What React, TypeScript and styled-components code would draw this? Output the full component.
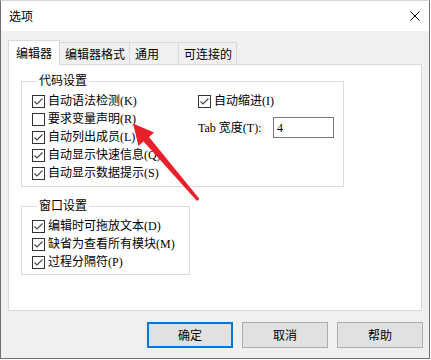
import styled, { createGlobalStyle } from "styled-components";

const GlobalStyle = createGlobalStyle`
  html, body {
    margin: 0;
    background: #ffffff;
  }
  body {
    font-family: "Noto Sans CJK SC", sans-serif;
  }
`;

const Window = styled.div`
  position: relative;
  box-sizing: border-box;
  width: 430px;
  height: 359px;
  border: 1px solid #6f6f6f;
  border-top-color: #d6d6d6;
  background: #f0f0f0;
  display: flex;
  flex-direction: column;
`;

const TitleBar = styled.div`
  height: 30px;
  flex: 0 0 auto;
  background: #ffffff;
  display: flex;
  align-items: center;
  justify-content: space-between;
  padding: 0 9px 0 8px;
  font: 12px/16px "Noto Sans CJK SC", sans-serif;
  color: #000;
`;

const Body = styled.div`
  flex: 1;
  display: flex;
  flex-direction: column;
  padding: 9px 7px 10px 7px;
`;

const TabStrip = styled.div`
  position: relative;
  z-index: 1;
  display: flex;
  align-items: flex-start;
  height: 25px;
  margin-bottom: -1px;
`;

const Tab = styled.div<{ $active?: boolean; $w: number }>`
  box-sizing: border-box;
  position: relative;
  z-index: ${(p) => (p.$active ? 2 : 1)};
  width: ${(p) => p.$w}px;
  height: ${(p) => (p.$active ? 25 : 22)}px;
  margin-top: ${(p) => (p.$active ? 0 : 2)}px;
  margin-left: -1px;
  &:first-child {
    margin-left: 0;
  }
  padding-left: ${(p) => (p.$active ? 7 : 5)}px;
  border: 1px solid #d9d9d9;
  border-bottom: none;
  background: ${(p) => (p.$active ? "#ffffff" : "#f0f0f0")};
  display: flex;
  align-items: center;
  font: 12px/16px "Noto Sans CJK SC", sans-serif;
  color: #000;
  white-space: nowrap;
`;

const Panel = styled.div`
  box-sizing: border-box;
  height: 247px;
  background: #ffffff;
  border: 1px solid #d9d9d9;
  padding: 9px 0 0 12px;
  display: flex;
  flex-direction: column;
  gap: 12px;
`;

const Group = styled.fieldset<{ $w: number; $pb: number }>`
  box-sizing: border-box;
  width: ${(p) => p.$w}px;
  margin: 0;
  padding: 4px 0 ${(p) => p.$pb}px 10px;
  border: 1px solid #dcdcdc;
  min-inline-size: 0;
`;

const Legend = styled.legend`
  margin-left: 5px;
  padding: 0 2px;
  height: 14px;
  font: 12px/14px "Liberation Serif", "Noto Sans CJK SC", serif;
  color: #000;
`;

const GroupBody = styled.div`
  display: flex;
`;

const Column = styled.div<{ $w?: number }>`
  display: flex;
  flex-direction: column;
  width: ${(p) => (p.$w ? `${p.$w}px` : "auto")};
`;

const CheckRow = styled.label`
  display: flex;
  align-items: center;
  gap: 3px;
  height: 18px;
  font: 12px/14px "Liberation Serif", "Noto Sans CJK SC", serif;
  color: #000;
  white-space: nowrap;
`;

const Box = styled.span`
  box-sizing: border-box;
  width: 13px;
  height: 13px;
  flex: 0 0 13px;
  border: 1px solid #333333;
  background: #ffffff;
  display: flex;
`;

const FieldRow = styled.div`
  display: flex;
  align-items: center;
  margin-top: 7px;
  height: 21px;
  font: 12px/14px "Liberation Serif", "Noto Sans CJK SC", serif;
  color: #000;
`;

const FieldLabel = styled.span`
  width: 75px;
  white-space: nowrap;
`;

const Field = styled.div`
  box-sizing: border-box;
  width: 61px;
  height: 21px;
  border: 1px solid #7a7a7a;
  background: #fff;
  padding-left: 3px;
  display: flex;
  align-items: center;
`;

const ButtonRow = styled.div`
  display: flex;
  justify-content: flex-end;
  gap: 9px;
  margin-top: 11px;
  margin-right: -1px;
`;

const Button = styled.button<{ $focus?: boolean }>`
  box-sizing: border-box;
  width: 86px;
  height: 26px;
  margin: 0;
  padding: 0;
  background: #e1e1e1;
  border: ${(p) => (p.$focus ? "2px solid #0078d7" : "1px solid #adadad")};
  font: 12px/16px "Noto Sans CJK SC", sans-serif;
  color: #000;
`;

// red annotation arrow drawn over the dialog
const Overlay = styled.svg`
  position: absolute;
  left: -1px;
  top: -1px;
  pointer-events: none;
`;

function Check({ on, label }: { on?: boolean; label: string }) {
  return (
    <CheckRow>
      <Box>
        {on && (
          <svg width="11" height="11" viewBox="0 0 11 11">
            <polyline
              points="1.5,5.5 4,8 9.5,2.5"
              fill="none"
              stroke="#444"
              strokeWidth="1.1"
            />
          </svg>
        )}
      </Box>
      {label}
    </CheckRow>
  );
}

export default function App() {
  return (
    <>
      <GlobalStyle />
      <Window>
        <TitleBar>
          <span>选项</span>
          <svg width="10" height="10" viewBox="0 0 10 10">
            <path d="M0.5 0.5 L9.5 9.5 M9.5 0.5 L0.5 9.5" stroke="#000" strokeWidth="1" />
          </svg>
        </TitleBar>
        <Body>
          <TabStrip>
            <Tab $active $w={52}>编辑器</Tab>
            <Tab $w={71}>编辑器格式</Tab>
            <Tab $w={50}>通用</Tab>
            <Tab $w={59}>可连接的</Tab>
          </TabStrip>
          <Panel>
            <Group $w={323} $pb={4}>
              <Legend>代码设置</Legend>
              <GroupBody>
                <Column $w={166}>
                  <Check on label="自动语法检测(K)" />
                  <Check label="要求变量声明(R)" />
                  <Check on label="自动列出成员(L)" />
                  <Check on label="自动显示快速信息(Q)" />
                  <Check on label="自动显示数据提示(S)" />
                </Column>
                <Column>
                  <Check on label="自动缩进(I)" />
                  <FieldRow>
                    <FieldLabel>Tab 宽度(T):</FieldLabel>
                    <Field>4</Field>
                  </FieldRow>
                </Column>
              </GroupBody>
            </Group>
            <Group $w={169} $pb={3}>
              <Legend>窗口设置</Legend>
              <Column>
                <Check on label="编辑时可拖放文本(D)" />
                <Check on label="缺省为查看所有模块(M)" />
                <Check on label="过程分隔符(P)" />
              </Column>
            </Group>
          </Panel>
          <ButtonRow>
            <Button $focus>确定</Button>
            <Button>取消</Button>
            <Button>帮助</Button>
          </ButtonRow>
        </Body>
        <Overlay width="430" height="359" viewBox="0 0 430 359">
          <polygon
            points="133,123.5 154,132.5 149,137 199.5,199 197,201 143.5,141.5 138.5,146"
            fill="#e8202a"
          />
        </Overlay>
      </Window>
    </>
  );
}
